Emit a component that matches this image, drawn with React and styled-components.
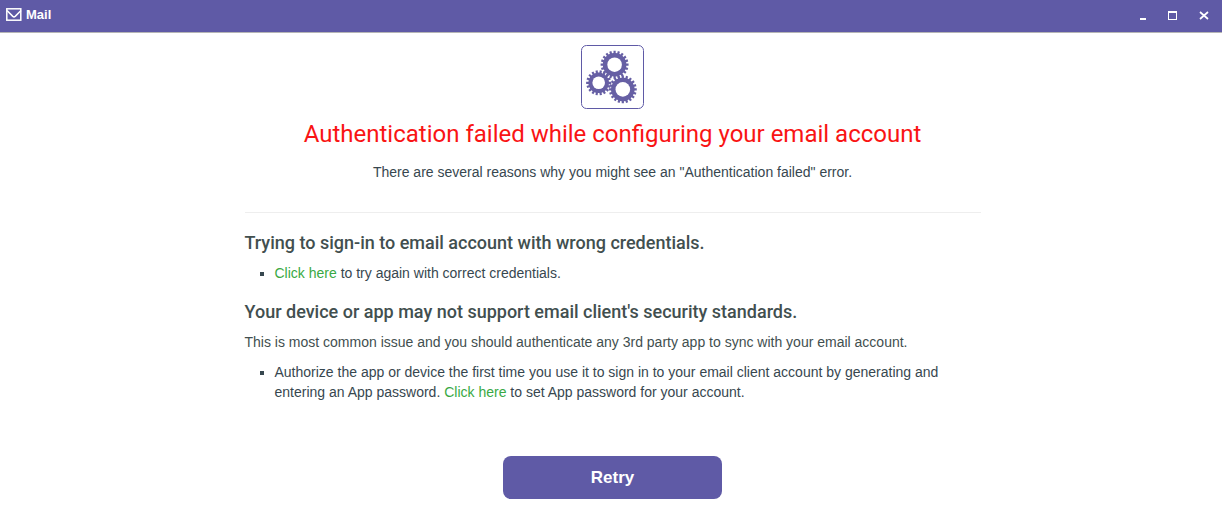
import React from 'react'
import styled, { createGlobalStyle } from 'styled-components'

const gears = [
  { cx: 33.6, cy: 19.7, hole: 7.3, body: 11.8, tip: 14, teeth: 20 },
  { cx: 17.7, cy: 37.8, hole: 6.3, body: 10.3, tip: 12.6, teeth: 18 },
  { cx: 41.8, cy: 44.4, hole: 7.3, body: 11.8, tip: 14, teeth: 20 },
]

// closed outline: two points at the tip and two at the root for every tooth
const outline = ({ cx, cy, body, tip, teeth }) => {
  const step = (Math.PI * 2) / teeth
  const at = (radius, angle) => `${cx + radius * Math.cos(angle)} ${cy + radius * Math.sin(angle)}`
  const points = Array.from({ length: teeth }, (_, i) => {
    const angle = i * step
    return [
      at(body, angle - step * 0.3),
      at(tip, angle - step * 0.25),
      at(tip, angle + step * 0.25),
      at(body, angle + step * 0.3),
    ].join('L')
  })
  return `M${points.join('L')}Z`
}

const Gear = gear => (
  <>
    <path d={outline(gear)} fill="#665fa4" />
    <circle cx={gear.cx} cy={gear.cy} r={gear.hole} fill="#fff" />
  </>
)

const App = () => {
  return (
    <>
      <GlobalStyle />
      <TitleBar>
        <Title>
          <EnvelopeIcon viewBox="0 0 16 14" aria-hidden="true">
            <rect x="0.8" y="0.8" width="14" height="11.4" />
            <path d="M1 2.5 L6.8 8.4 Q8 9.4 9.2 8.4 L15 2.5" />
          </EnvelopeIcon>
          Mail
        </Title>
        <WindowButtons>
          <WindowButton aria-label="Minimize">
            <svg width="10" height="10" shapeRendering="crispEdges">
              <path d="M3 8h6v2H3z" fill="#fff" />
            </svg>
          </WindowButton>
          <WindowButton aria-label="Maximize">
            <svg width="10" height="10" shapeRendering="crispEdges">
              <path d="M0 1h9v9H0zM1 3v6h7V3z" fill="#fff" fillRule="evenodd" />
            </svg>
          </WindowButton>
          <WindowButton aria-label="Close">
            <svg width="10" height="10">
              <path d="M1 2l8 7M9 2l-8 7" stroke="#fff" strokeWidth="1.7" />
            </svg>
          </WindowButton>
        </WindowButtons>
      </TitleBar>

      <Content>
        <GearBox viewBox="0 0 63 64" aria-hidden="true">
          <rect x="0.5" y="0.5" width="62" height="63" rx="5" fill="#fff" stroke="#5f5aa6" />
          {gears.map((gear, index) => (
            <Gear key={index} {...gear} />
          ))}
        </GearBox>
        <Heading>Authentication failed while configuring your email account</Heading>
        <Intro>There are several reasons why you might see an "Authentication failed" error.</Intro>
        <Divider />

        <Reason>
          <h2>Trying to sign-in to email account with wrong credentials.</h2>
          <ul>
            <li>
              <a href="#credentials">Click here</a> to try again with correct credentials.
            </li>
          </ul>
        </Reason>

        <Reason>
          <h2>Your device or app may not support email client's security standards.</h2>
          <p>This is most common issue and you should authenticate any 3rd party app to sync with your email account.</p>
          <ul>
            <li>
              Authorize the app or device the first time you use it to sign in to your email client account by
              generating and entering an App password. <a href="#app-password">Click here</a> to set App password for
              your account.
            </li>
          </ul>
        </Reason>

        <RetryButton type="button">Retry</RetryButton>
      </Content>
    </>
  )
}

const GlobalStyle = createGlobalStyle`
  * {
    box-sizing: border-box;
  }

  body {
    margin: 0;
    background: #fff;
    color: #37474f;
    font-family: 'Liberation Sans', Arial, sans-serif;
    font-size: 14px;
    line-height: 20px;
  }
`

const TitleBar = styled.header`
  display: flex;
  justify-content: space-between;
  align-items: center;
  height: 33px;
  padding: 0 13px 2px 6px;
  background: #5f5aa6;
  border-bottom: 1px solid #b5b5b5;
`

const Title = styled.div`
  display: flex;
  align-items: center;
  gap: 4px;
  color: #fff;
  font-size: 13px;
  font-weight: 700;
`

const EnvelopeIcon = styled.svg`
  width: 16px;
  height: 14px;
  fill: none;
  stroke: #fff;
  stroke-width: 1.5;
`

const WindowButtons = styled.div`
  display: flex;
  gap: 21px;
`

const WindowButton = styled.button`
  display: flex;
  padding: 0;
  border: 0;
  background: transparent;
  cursor: pointer;
`

const Content = styled.main`
  display: flex;
  flex-direction: column;
  max-width: 739px;
  margin: 0 auto;
  padding: 12px 0 20px 3px;
`

const GearBox = styled.svg`
  width: 63px;
  height: 64px;
  align-self: center;
`

const Heading = styled.h1`
  margin: 8px 0 0;
  color: #f91414;
  font-family: Roboto, sans-serif;
  font-size: 24px;
  font-weight: 400;
  line-height: 34px;
  text-align: center;
`

const Intro = styled.p`
  margin: 11px 0 0;
  text-align: center;
`

const Divider = styled.hr`
  width: 100%;
  margin: 30px 0 20px;
  border: 0;
  border-top: 1px solid #eee;
`

const Reason = styled.section`
  margin-bottom: 19px;

  h2 {
    margin: 0 0 10px;
    color: #424f4f;
    font-family: Roboto, sans-serif;
    font-size: 18px;
    font-weight: 500;
    line-height: 20px;
  }

  p {
    margin: 0 0 10px;
    color: #424f4f;
  }

  ul {
    margin: 0;
    padding-left: 30px;
    list-style: square;
  }

  a {
    color: #39a944;
    text-decoration: none;
  }
`

const RetryButton = styled.button`
  align-self: center;
  width: 219px;
  height: 43px;
  margin-top: 35px;
  border: 0;
  border-radius: 8px;
  background: #5f5aa6;
  color: #fff;
  font-family: 'Liberation Sans', Arial, sans-serif;
  font-size: 17px;
  font-weight: 700;
  cursor: pointer;
`

export default App
